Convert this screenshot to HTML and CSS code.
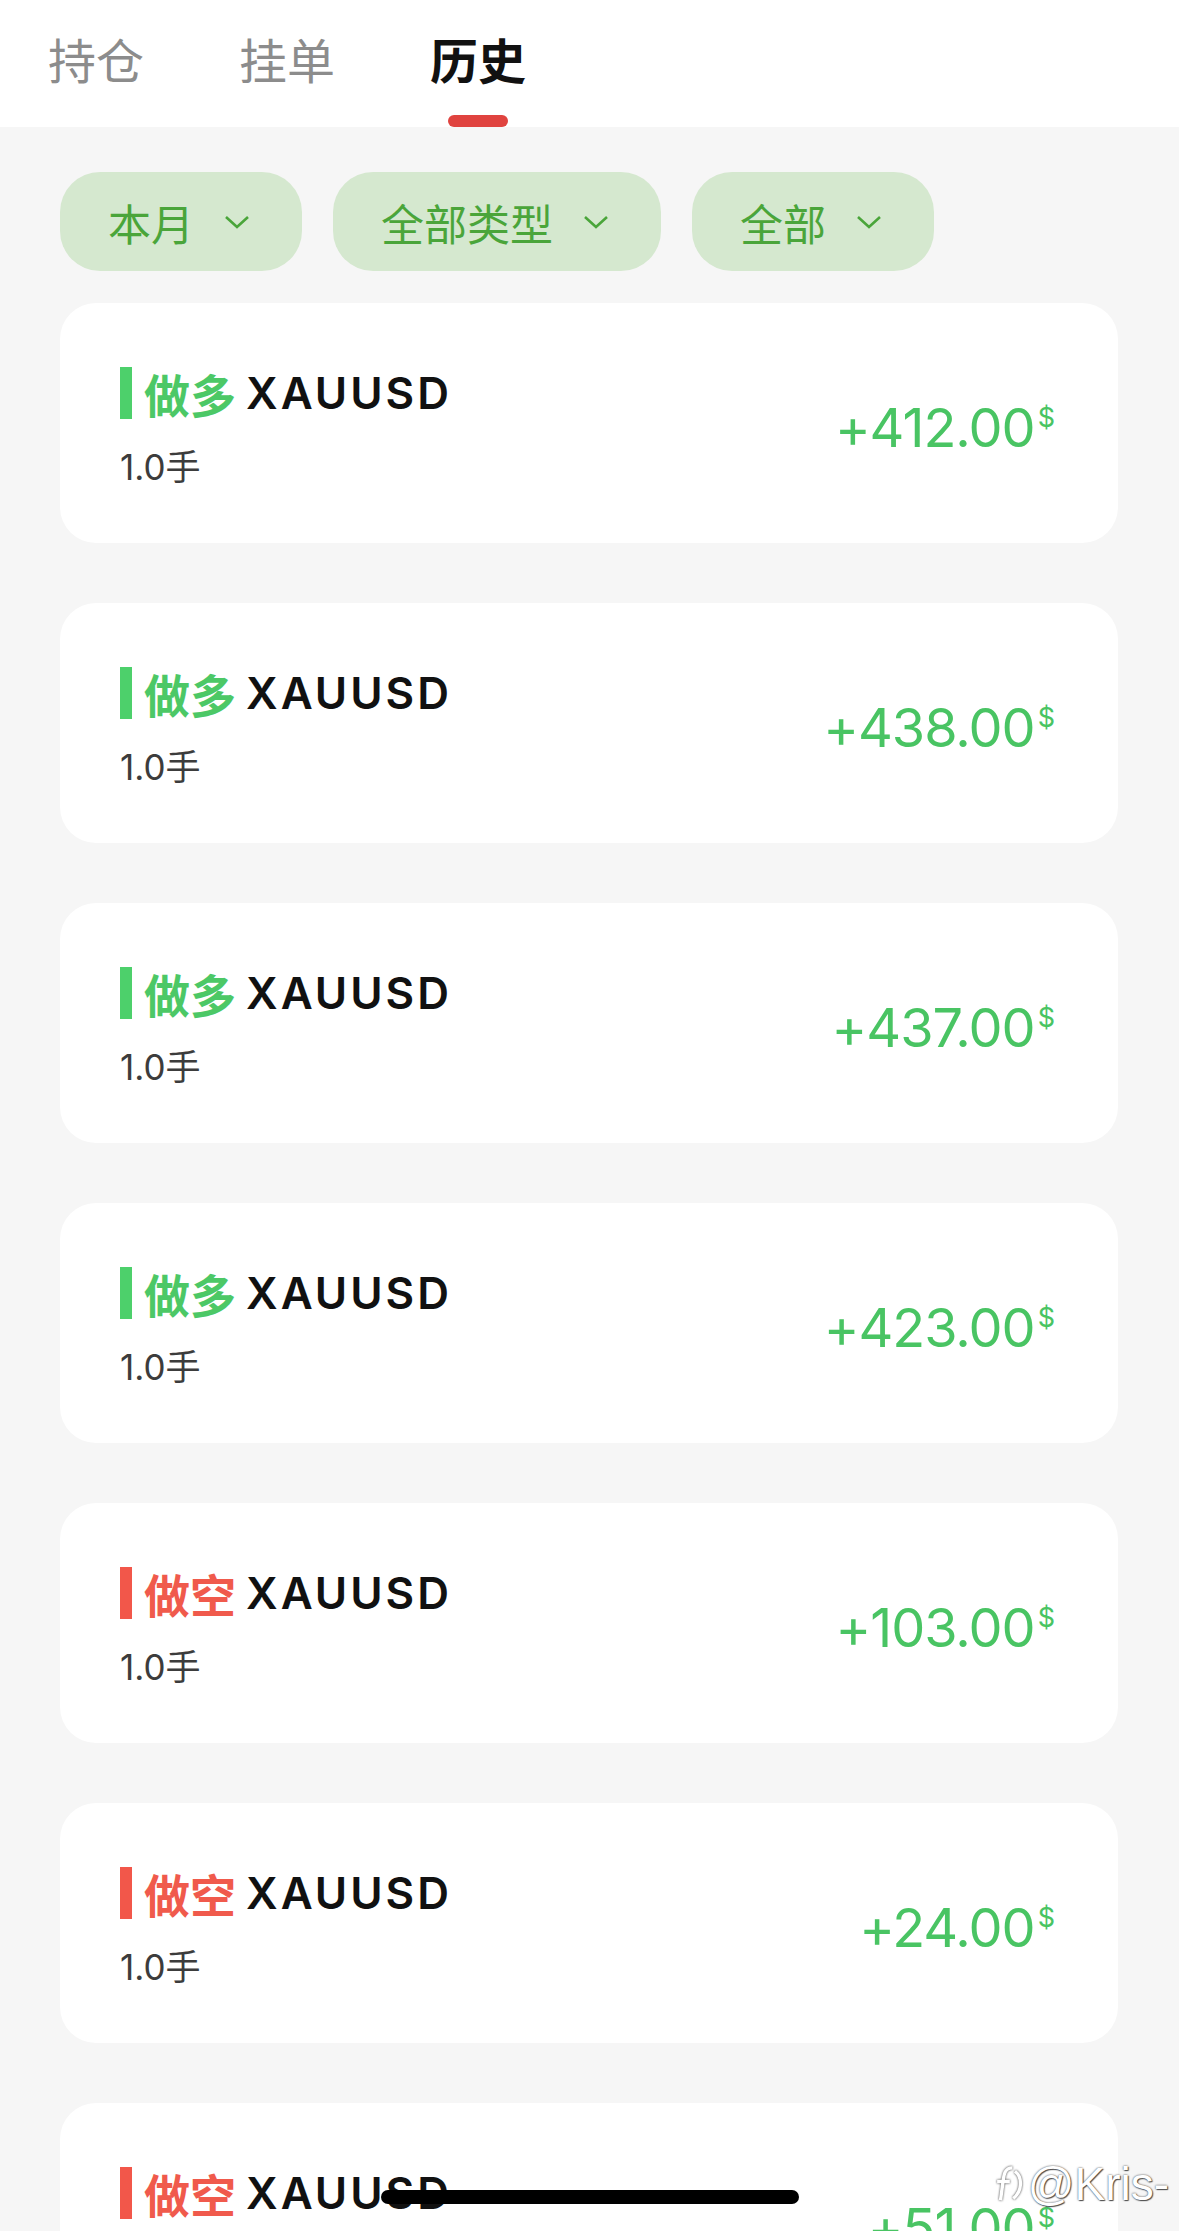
FILE: index.html
```html
<!DOCTYPE html>
<html lang="zh-CN">
<head>
    <meta charset="UTF-8">
    <meta name="viewport" content="width=device-width, initial-scale=1.0">
    <title>历史</title>
    <link rel="stylesheet" href="styles.css">
</head>
<body>
    <div class="tabs">
        <div class="tab">持仓</div>
        <div class="tab">挂单</div>
        <div class="tab active">历史</div>
    </div>

    <div class="filters">
        <div class="chip">本月<svg class="chev" viewBox="0 0 26 16"><path d="M2 3 L13 13 L24 3"/></svg></div>
        <div class="chip">全部类型<svg class="chev" viewBox="0 0 26 16"><path d="M2 3 L13 13 L24 3"/></svg></div>
        <div class="chip">全部<svg class="chev" viewBox="0 0 26 16"><path d="M2 3 L13 13 L24 3"/></svg></div>
    </div>

    <div class="list">
        <div class="card">
            <div class="info">
                <div class="title"><span class="bar long"></span><span class="side long">做多</span><span class="symbol">XAUUSD</span></div>
                <div class="lots">1.0手</div>
            </div>
            <div class="profit"><span class="num">+412.00</span><span class="cur">$</span></div>
        </div>
        <div class="card">
            <div class="info">
                <div class="title"><span class="bar long"></span><span class="side long">做多</span><span class="symbol">XAUUSD</span></div>
                <div class="lots">1.0手</div>
            </div>
            <div class="profit"><span class="num">+438.00</span><span class="cur">$</span></div>
        </div>
        <div class="card">
            <div class="info">
                <div class="title"><span class="bar long"></span><span class="side long">做多</span><span class="symbol">XAUUSD</span></div>
                <div class="lots">1.0手</div>
            </div>
            <div class="profit"><span class="num">+437.00</span><span class="cur">$</span></div>
        </div>
        <div class="card">
            <div class="info">
                <div class="title"><span class="bar long"></span><span class="side long">做多</span><span class="symbol">XAUUSD</span></div>
                <div class="lots">1.0手</div>
            </div>
            <div class="profit"><span class="num">+423.00</span><span class="cur">$</span></div>
        </div>
        <div class="card">
            <div class="info">
                <div class="title"><span class="bar short"></span><span class="side short">做空</span><span class="symbol">XAUUSD</span></div>
                <div class="lots">1.0手</div>
            </div>
            <div class="profit"><span class="num">+103.00</span><span class="cur">$</span></div>
        </div>
        <div class="card">
            <div class="info">
                <div class="title"><span class="bar short"></span><span class="side short">做空</span><span class="symbol">XAUUSD</span></div>
                <div class="lots">1.0手</div>
            </div>
            <div class="profit"><span class="num">+24.00</span><span class="cur">$</span></div>
        </div>
        <div class="card">
            <div class="info">
                <div class="title"><span class="bar short"></span><span class="side short">做空</span><span class="symbol">XAUUSD</span></div>
                <div class="lots">1.0手</div>
            </div>
            <div class="profit"><span class="num">+51.00</span><span class="cur">$</span></div>
        </div>
    </div>

    <div class="watermark">
        <svg class="wm-logo" viewBox="0 0 40 48"><path d="M24 5 C15 5 14 13 13 21 L10 43 M6 21 L21 21 M27 9 C36 16 36 32 25 41"/></svg>
        <span>@Kris-</span>
    </div>
    <div class="home-bar"></div>
</body>
</html>
```

FILE: styles.css
```css
* {
    margin: 0;
    padding: 0;
    box-sizing: border-box;
}

body {
    font-family: Inter, "Noto Sans CJK SC", sans-serif;
    background: #f6f6f6;
    color: #111;
    width: 1179px;
    height: 2231px;
    overflow: hidden;
    position: relative;
}

/* 顶部标签 */
.tabs {
    display: flex;
    gap: 95px;
    height: 127px;
    padding-left: 48px;
    background: #fff;
}

.tab {
    position: relative;
    font-family: "Noto Sans CJK SC", sans-serif;
    font-size: 48px;
    line-height: 48px;
    padding-top: 34px;
    color: #8c8c8c;
}

.tab.active {
    color: #111;
    font-weight: 700;
}

.tab.active::after {
    content: "";
    position: absolute;
    left: 50%;
    bottom: 0;
    width: 60px;
    height: 12px;
    margin-left: -30px;
    border-radius: 6px;
    background: #e0433f;
}

/* 筛选 */
.filters {
    display: flex;
    gap: 31px;
    padding: 0 60px;
    margin-top: 45px;
}

.chip {
    display: flex;
    align-items: center;
    height: 99px;
    padding: 0 52px 0 48px;
    border-radius: 40px;
    background: #d5e8cf;
    color: #4aa53a;
    font-family: "Noto Sans CJK SC", sans-serif;
    font-size: 43px;
}

.chev {
    width: 26px;
    height: 16px;
    margin-left: 30px;
    fill: none;
    stroke: #4aa53a;
    stroke-width: 2.6;
}

/* 列表 */
.list {
    display: flex;
    flex-direction: column;
    gap: 60px;
    padding: 0 61px 0 60px;
    margin-top: 32px;
}

.card {
    display: flex;
    justify-content: space-between;
    height: 240px;
    padding: 0 63px 0 60px;
    border-radius: 36px;
    background: #fff;
}

.info {
    padding-top: 61px;
}

.title {
    display: flex;
    align-items: center;
    height: 58px;
}

.bar {
    width: 12px;
    height: 52px;
    margin-right: 12px;
}

.bar.long { background: #4dd06b; }
.bar.short { background: #f2574a; }

.side {
    font-family: "Noto Sans CJK SC", sans-serif;
    font-size: 46px;
    font-weight: 700;
    line-height: 1;
}

.side.long { color: #4cc866; }
.side.short { color: #f05a4c; }

.symbol {
    margin-left: 10px;
    font-size: 44px;
    font-weight: 600;
    letter-spacing: 3px;
    line-height: 1;
    color: #111;
}

.lots {
    margin-top: 25px;
    font-size: 35px;
    line-height: 40px;
    color: #3c3c3c;
}

.profit {
    display: flex;
    align-items: flex-start;
    align-self: center;
    margin-top: 10px;
    color: #49c463;
}

.num {
    font-size: 54px;
    line-height: 1;
    letter-spacing: -1px;
}

.cur {
    font-size: 27px;
    line-height: 1;
    margin-left: 3px;
    margin-top: 3px;
}

/* 覆盖层 */
.home-bar {
    position: absolute;
    left: 381px;
    bottom: 27px;
    width: 418px;
    height: 14px;
    border-radius: 7px;
    background: #000;
}

.watermark {
    position: absolute;
    right: 10px;
    bottom: 20px;
    display: flex;
    align-items: center;
    font-family: "Liberation Sans Narrow", "Liberation Sans", sans-serif;
    font-size: 46px;
    color: #fff;
    text-shadow: 0 0 2px #333, 1px 1px 1px #555;
}

.wm-logo {
    width: 34px;
    height: 44px;
    fill: none;
    stroke: #fff;
    stroke-width: 4;
    margin-right: 2px;
    filter: drop-shadow(0 0 1px #333);
}
```
